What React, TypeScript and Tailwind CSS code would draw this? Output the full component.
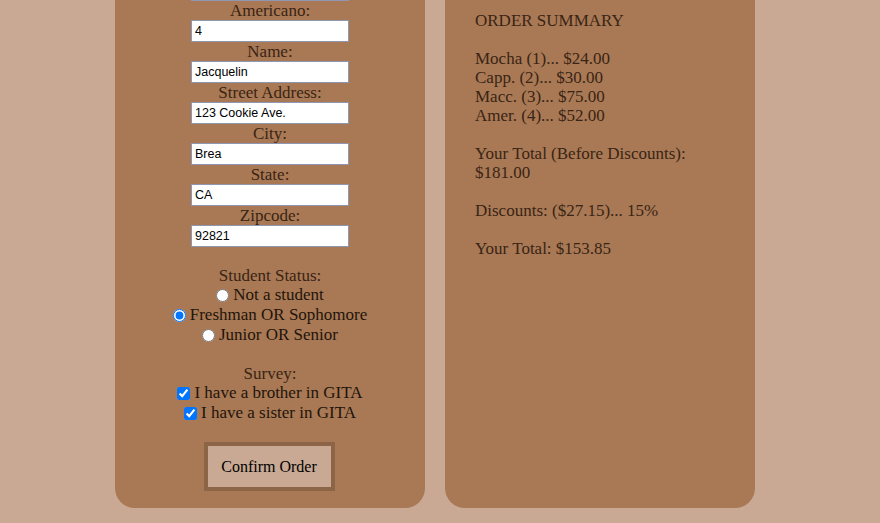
import React from 'react';

const serif = { fontFamily: '"Liberation Serif", "Times New Roman", serif' };

type FieldProps = {
  label: string;
  value: string;
};

function Field({ label, value }: FieldProps) {
  return (
    <>
      <div className="h-[19px] text-[17px] leading-[19px] text-[#3a2415]">{label}</div>
      <input
        type="text"
        defaultValue={value}
        className="box-border h-[22px] w-[158px] border border-[#8f96b2] bg-white px-[3px] text-[12.5px] text-black outline-none"
        style={{ fontFamily: '"Liberation Sans", Arial, sans-serif' }}
      />
    </>
  );
}

const fields = [
  { label: 'Americano:', value: '4' },
  { label: 'Name:', value: 'Jacquelin' },
  { label: 'Street Address:', value: '123 Cookie Ave.' },
  { label: 'City:', value: 'Brea' },
  { label: 'State:', value: 'CA' },
  { label: 'Zipcode:', value: '92821' },
];

const statuses = [
  { label: 'Not a student', checked: false },
  { label: 'Freshman OR Sophomore', checked: true },
  { label: 'Junior OR Senior', checked: false },
];

const summary = [
  'ORDER SUMMARY',
  '',
  'Mocha (1)... $24.00',
  'Capp. (2)... $30.00',
  'Macc. (3)... $75.00',
  'Amer. (4)... $52.00',
  '',
  'Your Total (Before Discounts):',
  '$181.00',
  '',
  'Discounts: ($27.15)... 15%',
  '',
  'Your Total: $153.85',
];

export default function App() {
  return (
    <div className="min-h-[523px] w-full overflow-hidden bg-[#c9a993]" style={serif}>
      <div className="flex gap-[20px] pl-[115px]">
        <form className="flex w-[310px] flex-col items-center rounded-b-[20px] bg-[#a87954] pb-[17px] text-center">
          <input
            type="text"
            defaultValue="3"
            className="-mt-[21px] box-border h-[22px] w-[158px] border border-[#8f96b2] bg-white"
          />
          {fields.map((f) => (
            <Field key={f.label} label={f.label} value={f.value} />
          ))}
          <div className="h-[19px]" />
          <div className="h-[19px] text-[17px] leading-[19px] text-[#3a2415]">Student Status:</div>
          {statuses.map((s) => (
            <label
              key={s.label}
              className="flex h-[20px] items-center justify-center gap-[4px] text-[17px] text-[#1f140b]"
            >
              <input type="radio" name="status" defaultChecked={s.checked} className="h-[13px] w-[13px]" />
              {s.label}
            </label>
          ))}
          <div className="h-[19px]" />
          <div className="h-[19px] text-[17px] leading-[19px] text-[#3a2415]">Survey:</div>
          {['I have a brother in GITA', 'I have a sister in GITA'].map((t) => (
            <label
              key={t}
              className="flex h-[20px] items-center justify-center gap-[4px] text-[17px] text-[#1f140b]"
            >
              <input type="checkbox" defaultChecked className="h-[13px] w-[13px]" />
              {t}
            </label>
          ))}
          <div className="h-[19px]" />
          <button
            type="button"
            className="-ml-[2px] box-border h-[49px] w-[131px] border-4 border-[#8b6546] bg-[#c9a993] text-[16px] text-black"
          >
            Confirm Order
          </button>
        </form>
        <div className="w-[310px] rounded-b-[20px] bg-[#a87954] px-[30px] pt-[11px] text-[17px] leading-[19px] text-[#3a2415]">
          {summary.map((line, i) => (
            <div key={i} className="h-[19px]">
              {line}
            </div>
          ))}
        </div>
      </div>
    </div>
  );
}
